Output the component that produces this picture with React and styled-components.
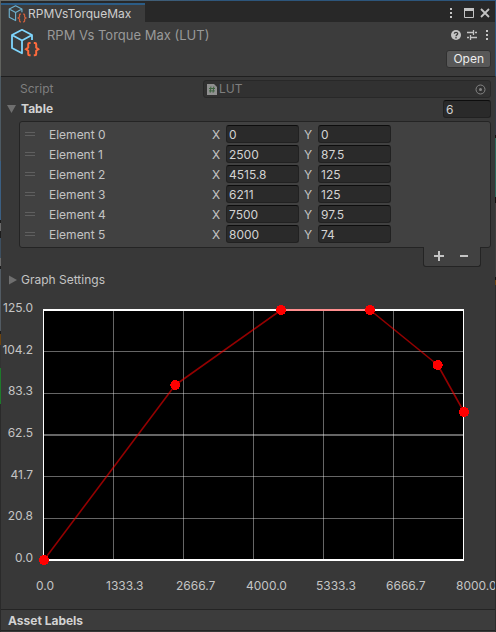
import React, { useState } from "react";
import styled, { createGlobalStyle } from "styled-components";

const Global = createGlobalStyle`
  * { box-sizing: border-box; }
  body {
    margin: 0;
    background: #383838;
    color: #c4c4c4;
    font: 12px/16px Inter, "Liberation Sans", sans-serif;
  }
  button, input { font: inherit; color: inherit; margin: 0; }
  button { background: none; border: 0; padding: 0; }
`;

const Window = styled.div`
  display: grid;
  grid-template-columns: 1px minmax(0, 1fr) 1px;
  grid-template-rows: 1px auto;
  min-height: 100vh;
  overflow: hidden;
`;

const TopEdge = styled.div`
  grid-column: 1 / -1;
  background: linear-gradient(to right, #6b6f6b, #2d567c 45%);
`;

const LeftEdge = styled.div`
  background: linear-gradient(
    #60625e 0 75px, #4d5a63 75px 160px, #3b5f82 160px 219px, #1c1c1c 219px 222px,
    #6a6a6a 222px 230px, #1c1c1c 230px 237px, #3d4f60 237px 257px, #6a6a6a 257px 265px,
    #1c1c1c 265px 268px, #525b63 268px 330px, #1c1c1c 330px 333px, #6b4310 333px 344px,
    #333 344px 367px, #1d7a2a 367px 403px, #2a2a2a 403px
  );
`;

const RightEdge = styled.div`
  background: linear-gradient(
    #2d567c 0 75px, #323a44 75px 134px, #111 134px 137px, #2b665a 137px 196px,
    #111 196px 202px, #3f3f3f 202px 276px, #111 276px 279px, #6b4310 279px 284px, #2c2c2c 284px
  );
`;

const Panel = styled.main`
  display: flex;
  flex-direction: column;
  overflow: hidden;
`;

const TabBar = styled.header`
  display: flex;
  align-items: stretch;
  justify-content: space-between;
  height: 21px;
  padding: 2px 3px 0 0;
  background: #282828;
`;

const Tab = styled.button`
  display: flex;
  align-items: center;
  gap: 1px;
  padding: 0 14px 0 7px;
  border-top: 2px solid #2c5d87;
  background: #3c3c3c;
  color: #cecece;
`;

const IconGroup = styled.div`
  display: flex;
  align-items: center;
  gap: 2px;
`;

const IconButton = styled.button`
  display: grid;
  place-items: center;
  width: ${(p) => p.$width || 14}px;
  height: 16px;
  color: #c4c4c4;
`;

const AssetHeader = styled.section`
  display: flex;
  align-items: flex-start;
  gap: 7px;
  min-height: 55px;
  padding: 5px 4px 6px 9px;
  background: #3c3c3c;
  border-bottom: 1px solid #1f1f1f;
`;

const AssetTitle = styled.h1`
  flex: 1;
  margin: 0;
  font-size: 13px;
  font-weight: 400;
  line-height: 16px;
  color: #999;
`;

const HeaderActions = styled.div`
  display: flex;
  flex-direction: column;
  align-items: flex-end;
  gap: 7px;
`;

const OpenButton = styled.button`
  height: 18px;
  padding: 0 6px;
  border: 1px solid #303030;
  border-radius: 3px;
  background: #585858;
  color: #eee;
  line-height: 16px;
`;

const Inspector = styled.section`
  display: flex;
  flex-direction: column;
  flex: 1;
  padding: 3px 4px 0 6px;
`;

const PropertyRow = styled.div`
  display: grid;
  grid-template-columns: 183px minmax(0, 1fr);
  align-items: center;
  height: 20px;
  padding: 0 0 2px 13px;
  color: #7f7f7f;
`;

const ObjectField = styled.div`
  display: flex;
  align-items: center;
  gap: 2px;
  height: 18px;
  padding: 0 3px;
  border: 1px solid #282828;
  border-radius: 3px;
  background: #313131;
`;

const ObjectName = styled.input`
  flex: 1;
  min-width: 0;
  border: 0;
  padding: 0;
  background: none;
  outline: none;
`;

const PickButton = styled(IconButton)`
  color: #858585;
`;

const FoldRow = styled.div`
  display: flex;
  justify-content: space-between;
  align-items: center;
  height: 18px;
`;

const Foldout = styled.button`
  display: flex;
  align-items: center;
  gap: ${(p) => (p.$strong ? 4 : 2)}px;
  height: 18px;
  line-height: 20px;
  font-weight: ${(p) => (p.$strong ? 700 : 400)};
  color: ${(p) => (p.$strong ? "#d2d2d2" : "#c4c4c4")};
`;

const NumberInput = styled.input`
  width: ${(p) => (p.$compact ? "48px" : "100%")};
  min-width: 0;
  height: 18px;
  padding: 1px 2px 0;
  border: 1px solid #212121;
  border-top-color: #0d0d0d;
  border-radius: 3px;
  background: #2a2a2a;
  color: #d2d2d2;
  outline: none;
  &:focus { border-color: #3a79bb; }
`;

const List = styled.ul`
  list-style: none;
  margin: 3px 0 0 12px;
  padding: 3px 7px 2px 5px;
  border: 1px solid #242424;
  border-radius: 3px;
  background: #414141;
`;

const ListItem = styled.li`
  display: grid;
  grid-template-columns: 10px 163px minmax(0, 1fr);
  column-gap: 14px;
  height: 20px;
  line-height: 20px;
`;

const DragHandle = styled.span`
  height: 4px;
  margin-top: 7px;
  border: solid #5f5f5f;
  border-width: 1px 0;
`;

const VectorField = styled.div`
  display: grid;
  grid-template-columns: repeat(3, minmax(0, 1fr));
  column-gap: 5px;
  margin-left: -14px;
`;

const Axis = styled.label`
  display: grid;
  grid-template-columns: 14px minmax(0, 1fr);
`;

const ListFooter = styled.div`
  align-self: flex-end;
  display: flex;
  justify-content: center;
  gap: 11px;
  width: 58px;
  height: 20px;
  margin: -1px 10px 0 0;
  padding: 1px 2px 0 0;
  border: 1px solid #242424;
  border-top: 0;
  border-radius: 0 0 3px 3px;
  background: #414141;
`;

const GraphFold = styled(FoldRow)`
  margin: 4px 0 0 2px;
`;

const Graph = styled.figure`
  display: grid;
  grid-template-columns: 26px minmax(0, 1fr);
  column-gap: 10px;
  margin: 11px 28px 0 0;
`;

const YAxis = styled.div`
  display: flex;
  flex-direction: column;
  align-items: flex-end;
  height: 266px;
`;

const YTick = styled.span`
  flex: 1 0 0;
  white-space: nowrap;
  &:last-child { flex: 0 0 16px; }
`;

const Plot = styled.svg`
  display: block;
  width: 100%;
  height: 252px;
  margin-top: 9px;
  overflow: visible;
`;

const XAxis = styled.div`
  grid-column: 2;
  display: flex;
  width: 100%;
  margin: 12px 0 0 -7px;
`;

const XTick = styled.span`
  flex: 1 0 0;
  width: 0;
  white-space: nowrap;
  &:last-child { flex: 0 0 0; }
`;

const AssetLabels = styled.footer`
  height: 22px;
  padding: 0 7px;
  border: solid #242424;
  border-width: 1px 0;
  margin-bottom: 1px;
  background: #3c3c3c;
  color: #d2d2d2;
  font-weight: 700;
  line-height: 21px;
`;

function AssetIcon({ size, faded }) {
  return (
    <svg width={size} height={size} viewBox="10 29 30 30" fill="none" opacity={faded ? 0.75 : 1} aria-hidden="true">
      <path
        d="M32 42V37L22 31.8L12 37V50L22 55.2V42.5L12 37M22 42.5L32 37"
        stroke="#7fd6fd" strokeWidth="1.8" strokeLinejoin="round"
      />
      <path
        d="M30.6 45H29.4Q28.2 45 28.2 46.3V49.6L26 51.2L28.2 52.8V56Q28.2 57.2 29.4 57.2H30.6M33.8 45H35Q36.2 45 36.2 46.3V49.6L38.4 51.2L36.2 52.8V56Q36.2 57.2 35 57.2H33.8"
        stroke="#ff6b3d" strokeWidth="2"
      />
    </svg>
  );
}

const DotsIcon = () => (
  <svg width="4" height="12" fill="currentColor" aria-hidden="true">
    <rect x="1" y="1" width="2" height="2" />
    <rect x="1" y="5" width="2" height="2" />
    <rect x="1" y="9" width="2" height="2" />
  </svg>
);

const MaximizeIcon = () => (
  <svg width="10" height="10" aria-hidden="true">
    <path d="M.5 1.5H9.5V9.5H.5Z" fill="none" stroke="currentColor" />
    <path d="M0 0H10V3H0Z" fill="currentColor" />
  </svg>
);

const CloseIcon = () => (
  <svg width="10" height="10" stroke="currentColor" strokeWidth="1.8" aria-hidden="true">
    <path d="M1 1L9 9M9 1L1 9" />
  </svg>
);

const HelpIcon = () => (
  <svg width="10" height="10" fill="none" aria-hidden="true">
    <circle cx="5" cy="5" r="5" fill="currentColor" />
    <path d="M3.3 3.8C3.4 1.8 6.7 1.8 6.7 3.8C6.7 4.9 5 4.9 5 6.2M5 7V8.4" stroke="#3c3c3c" strokeWidth="1.3" />
  </svg>
);

const PresetIcon = () => (
  <svg width="12" height="10" stroke="currentColor" strokeWidth="1.3" aria-hidden="true">
    <path d="M1 2.5H7M9 2.5H11M7.5 0V5M1 7.5H3M5 7.5H11M4.5 5V10" />
  </svg>
);

const ScriptIcon = () => (
  <svg width="10" height="11" aria-hidden="true">
    <path d="M0 0H7L10 3V11H0Z" fill="#909090" />
    <path d="M3.9 2.5L3.2 8.7M6.8 2.5L6.1 8.7M2 4.5H8M2 6.9H7.8" stroke="#3e6340" fill="none" />
  </svg>
);

const PickIcon = () => (
  <svg width="11" height="11" aria-hidden="true">
    <circle cx="5.5" cy="5.5" r="4.5" fill="none" stroke="currentColor" />
    <circle cx="5.5" cy="5.5" r="1.5" fill="currentColor" />
  </svg>
);

const Arrow = ({ open }) => (
  <svg width="10" height="10" fill="#6f6f6f" aria-hidden="true">
    <path d={open ? "M0 1H9L4.5 9Z" : "M0 .5V9.5L8 5Z"} />
  </svg>
);

const PlusIcon = () => (
  <svg width="10" height="10" stroke="currentColor" strokeWidth="2" aria-hidden="true">
    <path d="M0 5H10M5 0V10" />
  </svg>
);

const MinusIcon = () => (
  <svg width="8" height="10" stroke="currentColor" strokeWidth="2" aria-hidden="true">
    <path d="M0 5H8" />
  </svg>
);

const INITIAL = [
  ["0", "0"],
  ["2500", "87.5"],
  ["4515.8", "125"],
  ["6211", "125"],
  ["7500", "97.5"],
  ["8000", "74"],
];

const STEPS = [0, 1, 2, 3, 4, 5, 6];

function Chart({ rows }) {
  const pts = rows.map(([x, y]) => [Number(x) || 0, Number(y) || 0]);
  const maxX = Math.max(1, ...pts.map((p) => p[0]));
  const maxY = Math.max(1, ...pts.map((p) => p[1]));
  const px = (x) => `${(x / maxX) * 100}%`;
  const py = (y) => 1 + (1 - y / maxY) * 250;

  return (
    <Graph aria-label="Lookup table graph">
      <YAxis>
        {STEPS.map((i) => (
          <YTick key={i}>{((maxY * (6 - i)) / 6).toFixed(1)}</YTick>
        ))}
      </YAxis>
      <Plot>
        <rect width="100%" height="252" fill="#000" />
        {[1, 2, 3, 4, 5].map((i) => (
          <rect key={`v${i}`} x={`${(i * 100) / 6}%`} y="2" width="1" height="248" fill="#fff" opacity="0.4" />
        ))}
        {[1, 2, 3, 4, 5].map((i) => (
          <rect
            key={`h${i}`}
            y={i === 3 ? 125 : Math.floor(1 + (i * 250) / 6)}
            width="100%"
            height={i === 3 ? 2 : 1}
            fill="#fff"
            opacity="0.4"
          />
        ))}
        <g fill="#fff">
          <rect width="100%" height="2" />
          <rect y="250" width="100%" height="2" />
          <rect width="1" height="252" />
          <rect x="100%" width="1" height="252" />
        </g>
        <g transform="translate(1 0)">
          <g stroke="#f00" strokeWidth="1.6" opacity="0.58">
            {pts.slice(1).map((p, i) => (
              <line key={i} x1={px(pts[i][0])} y1={py(pts[i][1])} x2={px(p[0])} y2={py(p[1])} />
            ))}
          </g>
          <g fill="#f00" shapeRendering="crispEdges">
            {pts.map((p, i) => (
              <circle key={i} cx={px(p[0])} cy={py(p[1])} r="5" />
            ))}
          </g>
        </g>
      </Plot>
      <XAxis>
        {STEPS.map((i) => (
          <XTick key={i}>{((maxX * i) / 6).toFixed(1)}</XTick>
        ))}
      </XAxis>
    </Graph>
  );
}

export default function App() {
  const [rows, setRows] = useState(INITIAL);
  const [open, setOpen] = useState(true);
  const [settings, setSettings] = useState(false);

  const edit = (row, axis, value) =>
    setRows(rows.map((r, i) => (i === row ? r.map((v, a) => (a === axis ? value : v)) : r)));

  return (
    <>
      <Global />
      <Window>
        <TopEdge />
        <LeftEdge />
        <Panel>
          <TabBar>
            <Tab>
              <AssetIcon size={19} faded />
              RPMVsTorqueMax
            </Tab>
            <IconGroup>
              <IconButton $width={18} aria-label="Tab options"><DotsIcon /></IconButton>
              <IconButton aria-label="Maximize"><MaximizeIcon /></IconButton>
              <IconButton aria-label="Close"><CloseIcon /></IconButton>
            </IconGroup>
          </TabBar>

          <AssetHeader>
            <AssetIcon size={30} />
            <AssetTitle>RPM Vs Torque Max (LUT)</AssetTitle>
            <HeaderActions>
              <IconGroup>
                <IconButton $width={10} aria-label="Help"><HelpIcon /></IconButton>
                <IconButton $width={18} aria-label="Presets"><PresetIcon /></IconButton>
                <IconButton $width={8} aria-label="More"><DotsIcon /></IconButton>
              </IconGroup>
              <OpenButton>Open</OpenButton>
            </HeaderActions>
          </AssetHeader>

          <Inspector>
            <PropertyRow>
              <label htmlFor="script">Script</label>
              <ObjectField>
                <ScriptIcon />
                <ObjectName id="script" value="LUT" readOnly />
                <PickButton aria-label="Select script"><PickIcon /></PickButton>
              </ObjectField>
            </PropertyRow>

            <FoldRow>
              <Foldout $strong aria-expanded={open} onClick={() => setOpen(!open)}>
                <Arrow open={open} />
                Table
              </Foldout>
              <NumberInput $compact aria-label="Table size" value={rows.length} readOnly />
            </FoldRow>

            {open && (
              <>
                <List>
                  {rows.map((row, i) => (
                    <ListItem key={i}>
                      <DragHandle />
                      <span>Element {i}</span>
                      <VectorField>
                        {["X", "Y"].map((axis, a) => (
                          <Axis key={axis}>
                            {axis}
                            <NumberInput value={row[a]} onChange={(e) => edit(i, a, e.target.value)} />
                          </Axis>
                        ))}
                      </VectorField>
                    </ListItem>
                  ))}
                </List>
                <ListFooter>
                  <IconButton aria-label="Add element" onClick={() => setRows([...rows, rows[rows.length - 1] || ["0", "0"]])}>
                    <PlusIcon />
                  </IconButton>
                  <IconButton aria-label="Remove element" onClick={() => setRows(rows.slice(0, -1))}>
                    <MinusIcon />
                  </IconButton>
                </ListFooter>
              </>
            )}

            <GraphFold>
              <Foldout aria-expanded={settings} onClick={() => setSettings(!settings)}>
                <Arrow open={settings} />
                Graph Settings
              </Foldout>
            </GraphFold>

            <Chart rows={rows} />
          </Inspector>

          <AssetLabels>Asset Labels</AssetLabels>
        </Panel>
        <RightEdge />
      </Window>
    </>
  );
}
